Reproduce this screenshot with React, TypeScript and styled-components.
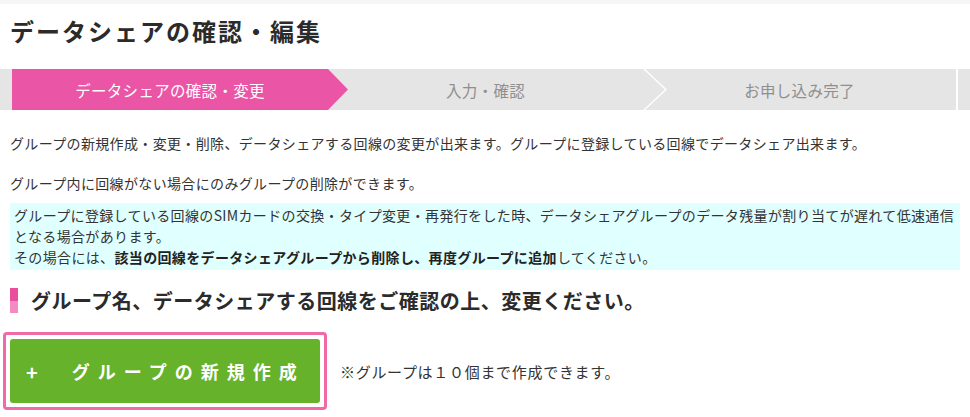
import React from "react";
import styled, { createGlobalStyle } from "styled-components";

const GlobalStyle = createGlobalStyle`
  html, body {
    margin: 0;
    padding: 0;
    background: #ffffff;
  }
  body {
    font-family: Meiryo, "Noto Sans CJK JP", "Noto Sans", sans-serif;
    color: #333333;
  }
`;

const steps = [
  { label: "データシェアの確認・変更", active: true },
  { label: "入力・確認", active: false },
  { label: "お申し込み完了", active: false },
];

const App: React.FC = () => {
  return (
    <>
      <GlobalStyle />
      <TopStrip />
      <Title>データシェアの確認・編集</Title>

      <StepBar>
        {steps.map((s, i) => (
          <Step key={s.label} $active={s.active} $last={i === steps.length - 1}>
            {s.label}
          </Step>
        ))}
      </StepBar>

      <Content>
        <Paragraph>
          グループの新規作成・変更・削除、データシェアする回線の変更が出来ます。グループに登録している回線でデータシェア出来ます。
        </Paragraph>
        <Paragraph $gap={20}>
          グループ内に回線がない場合にのみグループの削除ができます。
        </Paragraph>

        <InfoBox>
          グループに登録している回線のSIMカードの交換・タイプ変更・再発行をした時、データシェアグループのデータ残量が割り当てが遅れて低速通信
          <br />
          となる場合があります。
          <br />
          その場合には、
          <strong>該当の回線をデータシェアグループから削除し、再度グループに追加</strong>
          してください。
        </InfoBox>

        <SectionHeading>
          <HeadingMark />
          グループ名、データシェアする回線をご確認の上、変更ください。
        </SectionHeading>

        <ActionRow>
          <FocusRing>
            <CreateButton type="button">
              <Plus>+</Plus>
              グループの新規作成
            </CreateButton>
          </FocusRing>
          <Note>※グループは１０個まで作成できます。</Note>
        </ActionRow>
      </Content>
    </>
  );
};

export default App;

/* styled components */

const TopStrip = styled.div`
  height: 4px;
  background: #f6f6f6;
`;

const Title = styled.h1`
  margin: 12px 0 0;
  padding: 0 10px;
  height: 30px;
  line-height: 30px;
  font-size: 24px;
  font-weight: 700;
  letter-spacing: 2px;
  color: #2b2b2b;
`;

const StepBar = styled.div`
  display: flex;
  height: 41px;
  margin-top: 23px;
  padding-left: 12px;
  background: #e5e5e5;
`;

const Step = styled.div<{ $active: boolean; $last: boolean }>`
  position: relative;
  flex: 0 0 ${(p) => (p.$active ? 336 : 315)}px;
  display: flex;
  align-items: center;
  justify-content: center;
  box-sizing: border-box;
  font-size: 15.5px;
  letter-spacing: 0.3px;
  color: ${(p) => (p.$active ? "#ffffff" : "#8f8f8f")};
  ${(p) =>
    p.$active &&
    `
    background: #ea55a6;
    margin-right: -20px;
    padding-right: 20px;
    z-index: 1;
    clip-path: polygon(0 0, calc(100% - 20px) 0, 100% 50%, calc(100% - 20px) 100%, 0 100%);
  `}
  ${(p) =>
    !p.$active &&
    !p.$last &&
    `
    &::after {
      content: "";
      position: absolute;
      top: 0;
      left: 100%;
      width: 24px;
      height: 100%;
      background: #ffffff;
      clip-path: polygon(0 0, 2px 0, 24px 50%, 2px 100%, 0 100%, 22px 50%);
      z-index: 1;
    }
  `}
  ${(p) => p.$last && `border-right: 2px solid #ffffff;`}
`;

const Content = styled.div`
  padding: 0 10px;
`;

const Paragraph = styled.p<{ $gap?: number }>`
  margin: ${(p) => p.$gap ?? 23}px 0 0;
  font-size: 14px;
  line-height: 20px;
  letter-spacing: 0.35px;
  color: #333333;
`;

const InfoBox = styled.div`
  margin-top: 10px;
  padding: 2px 4px;
  background: #e0ffff;
  font-size: 14px;
  line-height: 21px;
  letter-spacing: 0.35px;
  color: #333333;

  strong {
    font-weight: 700;
    color: #222222;
  }
`;

const SectionHeading = styled.h2`
  display: flex;
  align-items: center;
  gap: 13px;
  margin: 17px 0 0;
  height: 26px;
  font-size: 20px;
  font-weight: 700;
  letter-spacing: 0.5px;
  color: #2b2b2b;
`;

const HeadingMark = styled.span`
  flex: 0 0 8px;
  height: 25px;
  background: linear-gradient(#ea4f9f 0 50%, #f28cc1 50% 100%);
`;

const ActionRow = styled.div`
  display: flex;
  align-items: center;
  margin: 19px 0 0 -7px;
`;

const FocusRing = styled.div`
  padding: 4px;
  border: 3px solid #f06aa5;
  border-radius: 4px;
  background: #ffffff;
`;

const CreateButton = styled.button`
  display: flex;
  align-items: center;
  width: 310px;
  height: 64px;
  padding: 0 0 0 16px;
  border: none;
  border-radius: 3px;
  background: #66b22a;
  color: #ffffff;
  font-family: inherit;
  font-size: 18px;
  font-weight: 700;
  letter-spacing: 8px;
  cursor: pointer;
`;

const Plus = styled.span`
  margin-right: 34px;
  font-size: 20px;
  letter-spacing: 0;
`;

const Note = styled.span`
  margin-left: 13px;
  font-size: 15px;
  letter-spacing: 0.7px;
  color: #333333;
`;
